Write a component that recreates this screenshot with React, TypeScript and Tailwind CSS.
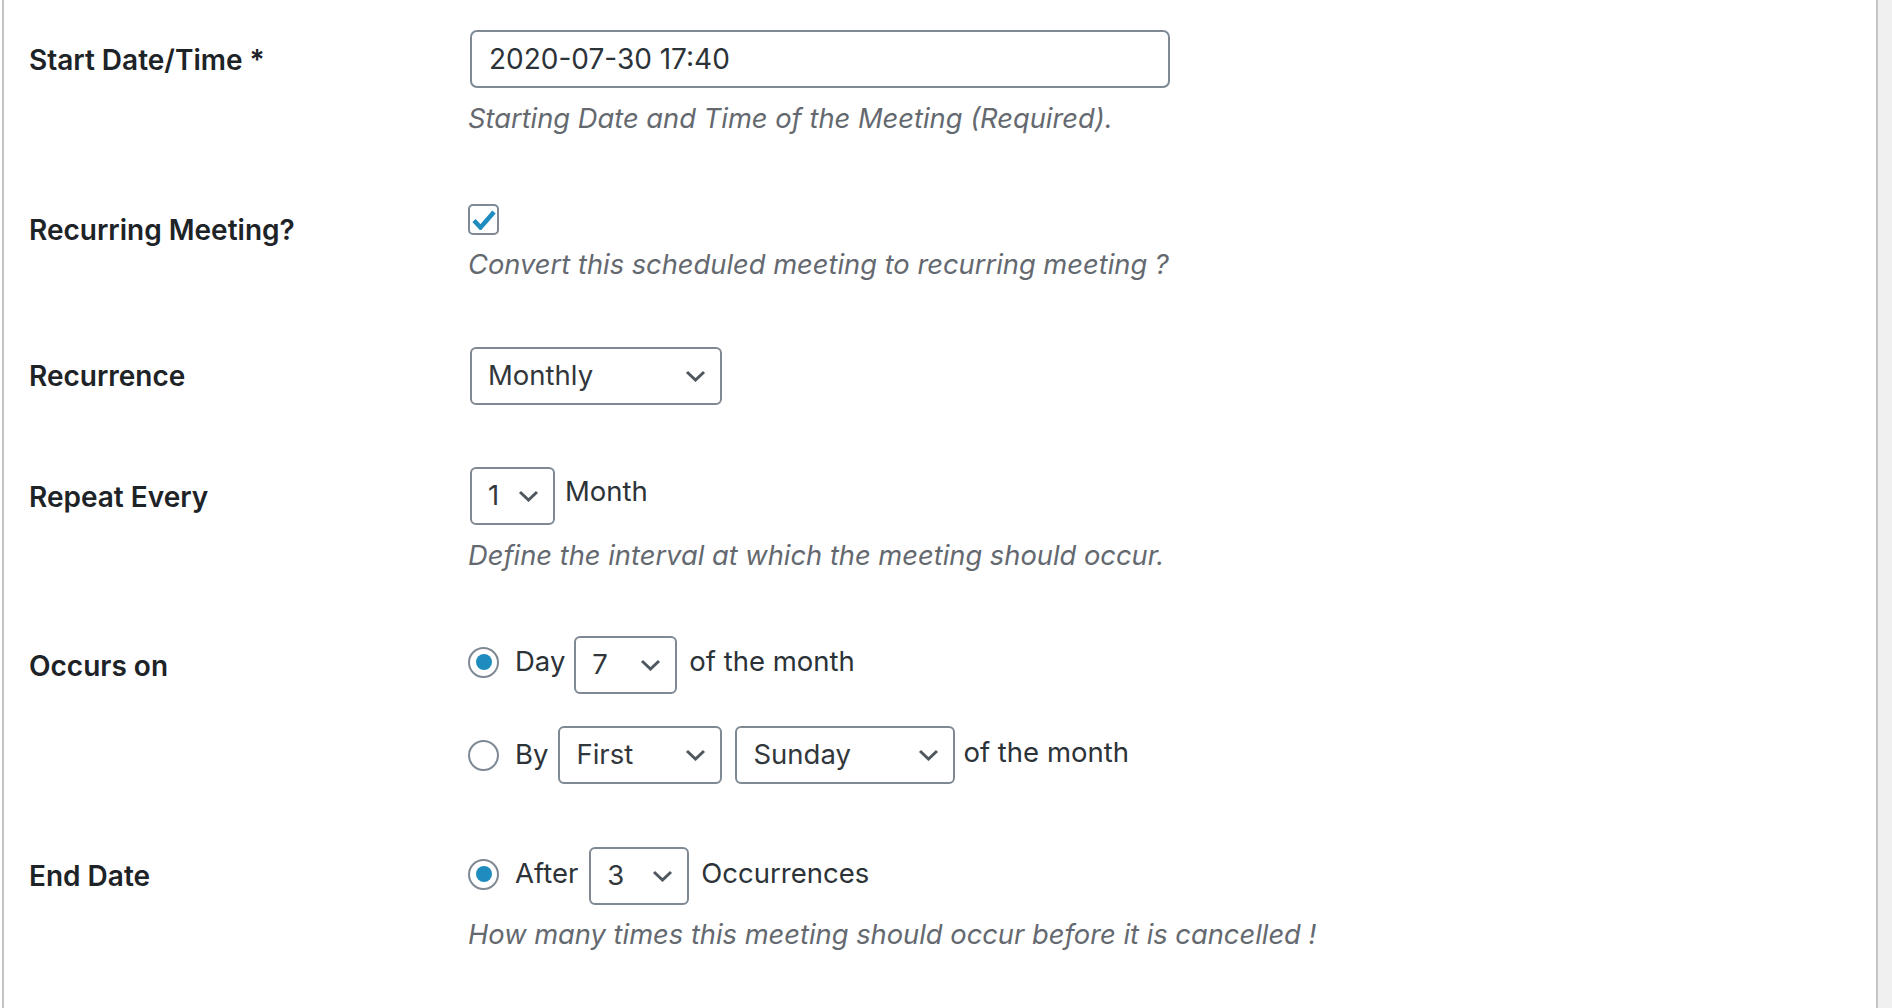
import React from "react";

const Chevron: React.FC = () => (
  <svg width="21" height="12" viewBox="0 0 21 12" className="shrink-0">
    <path d="M2 2l8.5 8 8.5-8" fill="none" stroke="#50575e" strokeWidth="3" />
  </svg>
);

const Select: React.FC<{ value: string; className: string }> = ({ value, className }) => (
  <div
    className={
      "flex h-[58px] shrink-0 items-center justify-between rounded-[6px] border-2 border-[#7e8993] bg-white pl-[16px] pr-[14px] text-[27.5px] text-[#32373c] " +
      className
    }
  >
    <span>{value}</span>
    <Chevron />
  </div>
);

const Radio: React.FC<{ checked?: boolean }> = ({ checked }) => (
  <div className="flex h-[31px] w-[31px] shrink-0 items-center justify-center rounded-full border-2 border-[#7e8993] bg-white">
    {checked && <div className="h-[16px] w-[16px] rounded-full bg-[#1e8cbe]" />}
  </div>
);

const Label: React.FC<{ text: string; top: string }> = ({ text, top }) => (
  <div className={"w-[441px] shrink-0 text-[28px] font-semibold leading-[30px] text-[#1d2327] " + top}>
    {text}
  </div>
);

const Desc: React.FC<{ text: string; top: string }> = ({ text, top }) => (
  <p className={"-ml-[2px] whitespace-nowrap text-[27.3px] italic leading-[30px] text-[#646970] " + top}>{text}</p>
);

const App: React.FC = () => {
  return (
    <div className="flex h-screen bg-white font-['Inter','Liberation_Sans',sans-serif]">
      <div className="ml-[2px] flex-1 border-x-2 border-[#c3c4c7] bg-white pl-[25px]">
        {/* start date */}
        <div className="flex">
          <Label text="Start Date/Time *" top="pt-[45px]" />
          <div className="pt-[30px]">
            <div className="flex h-[58px] w-[700px] items-center rounded-[7px] border-2 border-[#7e8993] pl-[17px] text-[28px] text-[#2c3338]">
              2020-07-30 17:40
            </div>
            <Desc text="Starting Date and Time of the Meeting (Required)." top="mt-[16px]" />
          </div>
        </div>

        {/* recurring */}
        <div className="flex">
          <Label text="Recurring Meeting?" top="pt-[81px]" />
          <div className="pt-[70px]">
            <div className="-ml-[2px] flex h-[31px] w-[31px] items-center justify-center rounded-[5px] border-2 border-[#7e8993] bg-white">
              <svg width="24" height="20" viewBox="0 0 24 20">
                <path d="M2 10.5l6.5 7L22 2" fill="none" stroke="#1e8cbe" strokeWidth="4.5" />
              </svg>
            </div>
            <Desc text="Convert this scheduled meeting to recurring meeting ?" top="mt-[15px]" />
          </div>
        </div>

        {/* recurrence */}
        <div className="flex">
          <Label text="Recurrence" top="pt-[81px]" />
          <div className="pt-[67px]">
            <Select value="Monthly" className="w-[252px]" />
          </div>
        </div>

        {/* repeat every */}
        <div className="flex">
          <Label text="Repeat Every" top="pt-[77px]" />
          <div className="pt-[62px]">
            <div className="flex items-center text-[27.5px] text-[#2c3338]">
              <Select value="1" className="w-[85px]" />
              <span className="ml-[10px] -mt-[8px]">Month</span>
            </div>
            <Desc text="Define the interval at which the meeting should occur." top="mt-[16px]" />
          </div>
        </div>

        {/* occurs on */}
        <div className="flex">
          <Label text="Occurs on" top="pt-[80px]" />
          <div className="-ml-[2px] pt-[65px] text-[27.5px] text-[#2c3338]">
            <div className="flex items-center">
              <div className="-mt-[6px]">
                <Radio checked />
              </div>
              <span className="ml-[16px] -mt-[6px]">Day</span>
              <Select value="7" className="ml-[9px] w-[103px]" />
              <span className="ml-[12px] -mt-[6px]">of the month</span>
            </div>
            <div className="mt-[32px] flex items-center">
              <Radio />
              <span className="ml-[16px]">By</span>
              <Select value="First" className="ml-[10px] w-[164px]" />
              <Select value="Sunday" className="ml-[13px] w-[220px]" />
              <span className="ml-[8px] -mt-[4px]">of the month</span>
            </div>
          </div>
        </div>

        {/* end date */}
        <div className="flex">
          <Label text="End Date" top="pt-[77px]" />
          <div className="pt-[63px] text-[27.5px] text-[#2c3338]">
            <div className="-ml-[2px] flex items-center">
              <div className="-mt-[4px]">
                <Radio checked />
              </div>
              <span className="ml-[16px] -mt-[4px]">After</span>
              <Select value="3" className="ml-[11px] w-[100px]" />
              <span className="ml-[12px] -mt-[4px]">Occurrences</span>
            </div>
            <Desc text="How many times this meeting should occur before it is cancelled !" top="mt-[15px]" />
          </div>
        </div>
      </div>
      <div className="w-[14px] shrink-0 bg-[#f0f0f1]" />
    </div>
  );
};

export default App;
